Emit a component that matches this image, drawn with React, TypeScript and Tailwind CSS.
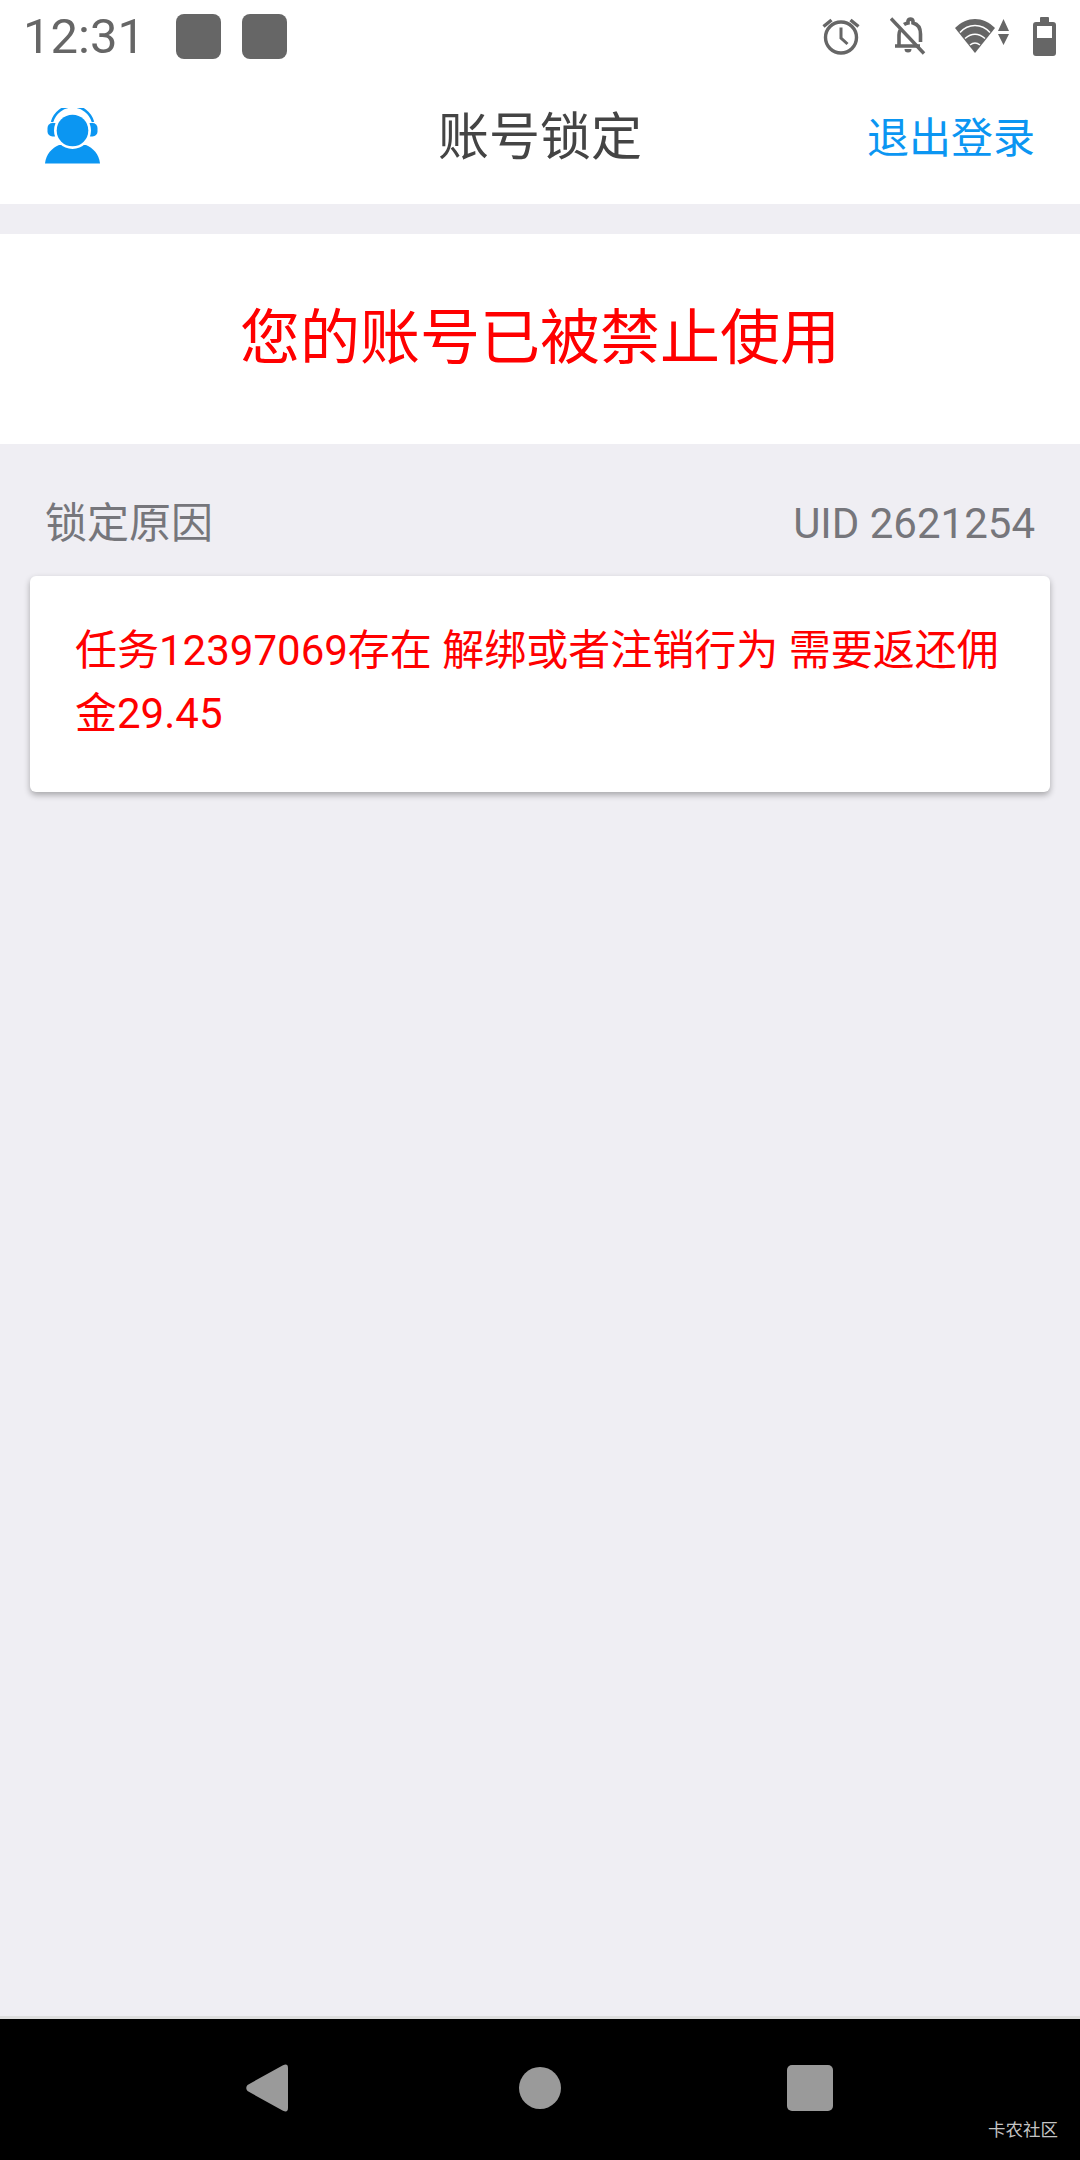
const FONT = "font-['Roboto','Noto_Sans_CJK_SC',sans-serif]";

function StatusIcons() {
  return (
    <div className="flex items-center">
      {/* alarm */}
      <svg width="38" height="40" viewBox="0 0 38 40" fill="none" stroke="#666" className="mr-[30px]">
        <circle cx="19" cy="21.5" r="15.5" strokeWidth="3.4" />
        <path d="M19 11.5V22l6.5 6" strokeWidth="3" />
        <path d="M1.5 10.500l8-6.500M36.500 10.500l-8-6.500" strokeWidth="3.4" />
      </svg>
      {/* bell off */}
      <svg width="36" height="38" viewBox="0 0 36 38" fill="none" className="mr-[29px]">
        <path d="M5 29h25M9 29V18c0-2 .5-3.500 1.200-5M14 7.500c1.200-.8 2.500-1.300 4-1.600V4a2.600 2.600 0 0 1 5 0v1.900c5 1.200 7.500 5.500 7.500 11V25" stroke="#666" strokeWidth="3.6" />
        <path d="M14.500 32h7a3.500 3.500 0 0 1-7 0z" fill="#666" />
        <path d="M1 1.500l33 35" stroke="#666" strokeWidth="3.4" />
      </svg>
      {/* wifi + data arrows */}
      <svg width="54" height="38" viewBox="0 0 54 38" className="mr-[24px]">
        <path d="M0 11C6 5 13 2 20 2s14 3 20 9L20 36z" fill="#666" />
        <path d="M5 15.500C9 11 15 8.500 20 8.500s11 2.500 15 7M10 21.500Q20 13 30 21.500M15 28Q20 24 25 28" fill="none" stroke="#fff" strokeWidth="1.500" />
        <path d="M48.500 2L54 14H43zM43 17h11l-5.500 11z" fill="#666" />
      </svg>
      {/* battery */}
      <svg width="23" height="39" viewBox="0 0 23 39">
        <path d="M7 1a1 1 0 0 1 1-1h7a1 1 0 0 1 1 1v4h4a3 3 0 0 1 3 3v28a3 3 0 0 1-3 3H3a3 3 0 0 1-3-3V8a3 3 0 0 1 3-3h4z" fill="#666" />
        <rect x="4" y="9" width="15" height="12" fill="#fff" />
      </svg>
    </div>
  );
}

function SupportIcon() {
  return (
    <svg width="55" height="56" viewBox="0 0 55 56" className="mb-[4px]">
      <path d="M7 14A21.250 21.250 0 0 1 48 14" fill="none" stroke="#0b96f2" strokeWidth="2.500" />
      <rect x="2.500" y="15" width="12" height="13.500" rx="5" fill="#0b96f2" />
      <rect x="40.500" y="15" width="12" height="13.500" rx="5" fill="#0b96f2" />
      <path d="M0 55.500C1 46 7 40 14 37h27c7 3 13 9 14 18.500z" fill="#0b96f2" />
      <circle cx="27.500" cy="22.500" r="18.500" fill="#fff" />
      <circle cx="27.500" cy="22.500" r="15.800" fill="#0b96f2" />
    </svg>
  );
}

export default function App() {
  return (
    <div className={`flex h-[2160px] w-[1080px] flex-col bg-[#efeef3] ${FONT}`}>
      <div className="bg-white">
        <div className="flex h-[72px] items-center justify-between pl-[23px] pr-[24px]">
          <div className="flex items-center">
            <span className="w-[153px] text-[49px] leading-none text-[#666]">12:31</span>
            <div className="h-[45px] w-[45px] rounded-[8px] bg-[#666]" />
            <div className="ml-[21px] h-[45px] w-[45px] rounded-[8px] bg-[#666]" />
          </div>
          <StatusIcons />
        </div>
        <div className="relative flex h-[132px] items-center justify-between px-[45px]">
          <SupportIcon />
          <span className="absolute left-0 right-0 text-center text-[51px] text-[#444]">账号锁定</span>
          <span className="text-[42px] text-[#0b96f2]">退出登录</span>
        </div>
      </div>

      <div className="mt-[30px] flex h-[210px] items-center justify-center bg-white">
        <span className="text-[60px] text-[#ff0000]">您的账号已被禁止使用</span>
      </div>

      <div className="flex h-[132px] items-center justify-between px-[45px] pt-[26px] text-[42px] text-[#76767b]">
        <span>锁定原因</span>
        <span>UID 2621254</span>
      </div>

      <div className="mx-[30px] rounded-[6px] bg-white px-[45px] pb-[47px] pt-[43px] text-[42px] leading-[63px] text-[#ff0000] shadow-[0_3px_6px_rgba(0,0,0,0.3)]">
        任务12397069存在 解绑或者注销行为 需要返还佣金29.45
      </div>

      <div className="flex-1" />

      <div className="relative flex h-[144px] items-center border-t-[3px] border-[#dedede] bg-black pb-[3px] pl-[246px]">
        <svg width="42" height="48" viewBox="0 0 42 48">
          <path d="M1.500 21L37 1.200Q42-1 42 4v40q0 5-5 2.800L1.500 27q-2.500-3 0-6z" fill="#9a9a9a" />
        </svg>
        <div className="ml-[231px] h-[42px] w-[42px] rounded-full bg-[#9a9a9a]" />
        <div className="ml-[226px] h-[46px] w-[46px] rounded-[5px] bg-[#9a9a9a]" />
        <span className="absolute bottom-[21px] right-[22px] text-[17.5px] leading-none text-[#c4c4c4]">卡农社区</span>
      </div>
    </div>
  );
}
